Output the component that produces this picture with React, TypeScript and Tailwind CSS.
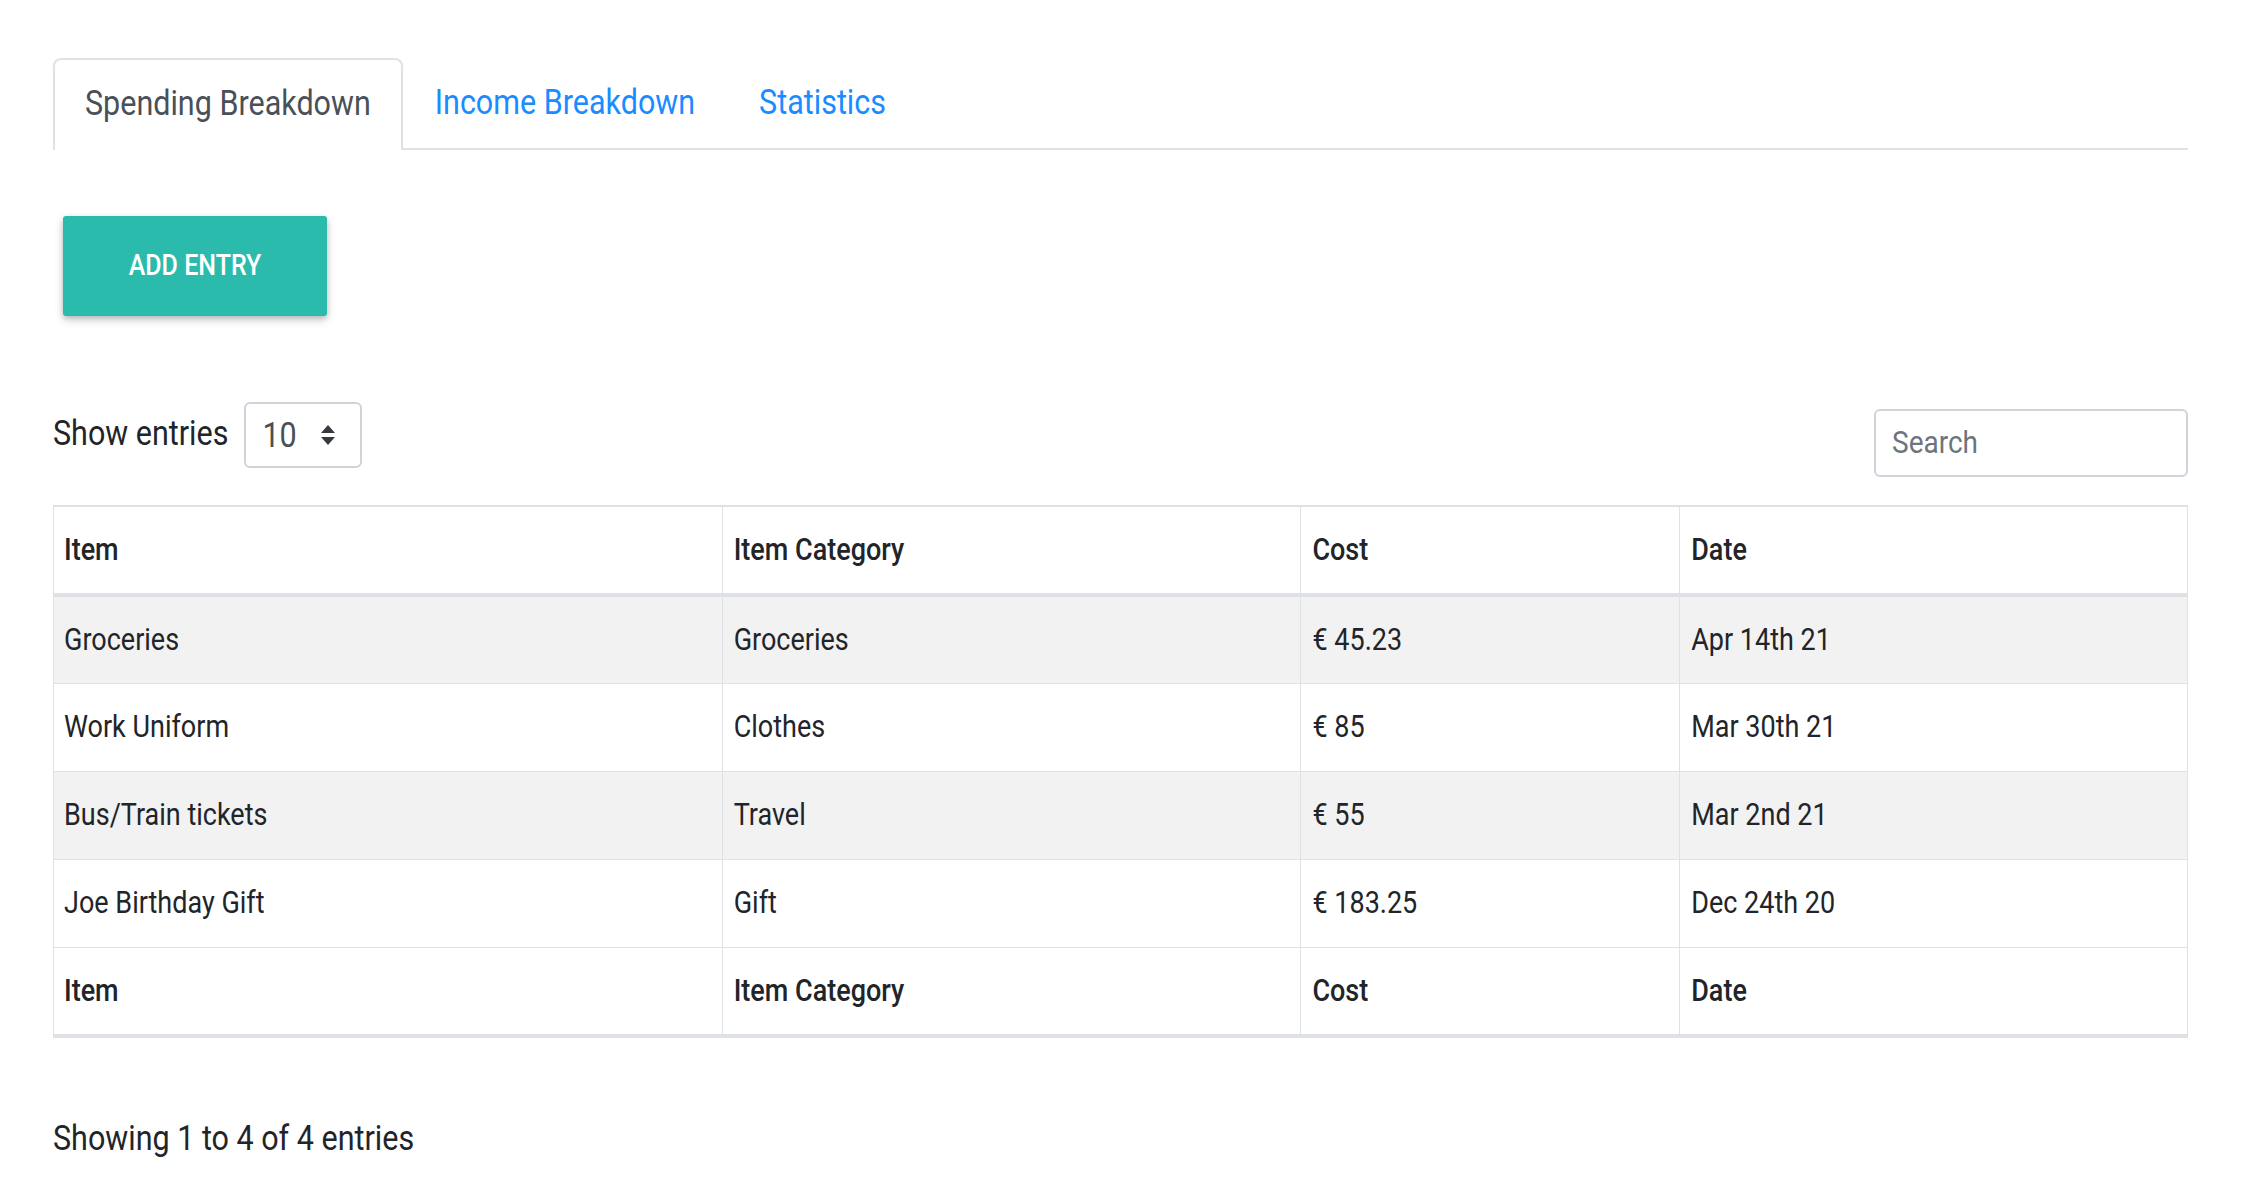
import React from "react";

const rows = [
  { item: "Groceries", category: "Groceries", cost: "€ 45.23", date: "Apr 14th 21" },
  { item: "Work Uniform", category: "Clothes", cost: "€ 85", date: "Mar 30th 21" },
  { item: "Bus/Train tickets", category: "Travel", cost: "€ 55", date: "Mar 2nd 21" },
  { item: "Joe Birthday Gift", category: "Gift", cost: "€ 183.25", date: "Dec 24th 20" },
];

// the screenshot's lettering is a bit taller than Roboto's natural shape
const T = ({ children }: { children: React.ReactNode }) => (
  <span className="inline-block scale-y-[1.15]">{children}</span>
);

const SortArrows = () => (
  <svg width="16" height="22" viewBox="0 0 16 22" className="fill-[#343a40]">
    <path d="M8 1 L15 9 L1 9 Z" />
    <path d="M1 13 L15 13 L8 21 Z" />
  </svg>
);

const HeaderRow = () => (
  <tr className="h-[89px] text-left">
    <th className="w-[669px] border border-b-4 border-[#dee2e6] px-[10px] font-medium"><T>Item</T></th>
    <th className="w-[579px] border border-b-4 border-[#dee2e6] px-[11px] font-medium"><T>Item Category</T></th>
    <th className="w-[379px] border border-b-4 border-[#dee2e6] px-[11px] font-medium"><T>Cost</T></th>
    <th className="w-[508px] border border-b-4 border-[#dee2e6] px-[11px] font-medium"><T>Date</T></th>
  </tr>
);

export default function App() {
  return (
    <div className="min-h-screen bg-white pl-[53px] pt-[58px] font-['Roboto',sans-serif] text-[#212529]">
      <div className="w-[2135px]">
        {/* tabs */}
        <div className="flex border-b-2 border-[#dee2e6] text-[30.5px]">
          <div className="-mb-[2px] flex h-[92px] items-center rounded-t-[8px] border-2 border-b-0 border-[#dee2e6] bg-white px-[30px] pb-[4px] text-[#495057]">
            <T>Spending Breakdown</T>
          </div>
          <div className="flex h-[90px] items-center px-[32px] pb-[2px] text-[#1a8cff]"><T>Income Breakdown</T></div>
          <div className="flex h-[90px] items-center px-[32px] pb-[2px] text-[#1a8cff]"><T>Statistics</T></div>
        </div>

        <button className="ml-[10px] mt-[66px] flex h-[100px] w-[264px] items-center justify-center rounded-[3px] bg-[#2bbbad] text-[25px] font-medium uppercase text-white shadow-[0_4px_10px_rgba(0,0,0,0.18),0_2px_5px_rgba(0,0,0,0.16)]">
          <T>Add Entry</T>
        </button>

        {/* controls */}
        <div className="mt-[86px] flex items-start justify-between">
          <div className="flex items-center gap-[16px] text-[30.5px]">
            <span className="pb-[4px]"><T>Show entries</T></span>
            <div className="flex h-[66px] w-[118px] items-center justify-between rounded-[6px] border-2 border-[#ced4da] pl-[16px] pr-[24px] text-[#495057]">
              <T>10</T>
              <SortArrows />
            </div>
          </div>
          <div className="mt-[7px] flex h-[68px] w-[314px] items-center rounded-[6px] border-2 border-[#ced4da] px-[16px] text-[28px] text-[#6c757d]">
            <T>Search</T>
          </div>
        </div>

        {/* table */}
        <table className="mt-[28px] w-full border-collapse border-t-2 border-[#dee2e6] text-[27px]">
          <thead>
            <HeaderRow />
          </thead>
          <tbody>
            {rows.map((r, i) => (
              <tr key={r.item} className={`h-[88px] ${i % 2 === 0 ? "bg-[#f2f2f2]" : "bg-white"}`}>
                <td className="border border-[#dee2e6] px-[10px]"><T>{r.item}</T></td>
                <td className="border border-[#dee2e6] px-[11px]"><T>{r.category}</T></td>
                <td className="border border-[#dee2e6] px-[11px]"><T>{r.cost}</T></td>
                <td className="border border-[#dee2e6] px-[11px]"><T>{r.date}</T></td>
              </tr>
            ))}
          </tbody>
          <tfoot>
            <HeaderRow />
          </tfoot>
        </table>

        <div className="mt-[77px] text-[30.5px]"><T>Showing 1 to 4 of 4 entries</T></div>
      </div>
    </div>
  );
}
